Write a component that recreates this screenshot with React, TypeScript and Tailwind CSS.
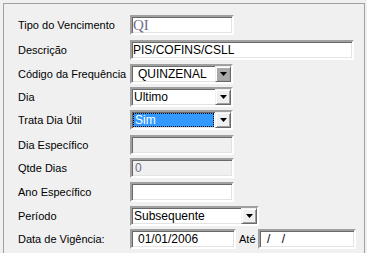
import type { ReactNode } from 'react';

const sunken =
  'border-2 border-t-[#a0a0a0] border-l-[#a0a0a0] border-b-white border-r-white shadow-[inset_1px_1px_0_#696969,inset_-1px_-1px_0_#e3e3e3]';

function Row({ label, h, children }: { label: string; h: string; children: ReactNode }) {
  return (
    <div className={`flex items-start ${h}`}>
      <div className="w-[112px] h-[20px] flex items-center text-[11px] text-black">{label}</div>
      {children}
    </div>
  );
}

function Field({ w, disabled, children }: { w: string; disabled?: boolean; children?: ReactNode }) {
  return (
    <div className={`${w} h-[20px] ${sunken} ${disabled ? 'bg-[#f0f0f0]' : 'bg-white'} flex items-center pl-[1px] text-[12px] leading-none overflow-hidden whitespace-nowrap`}>
      {children}
    </div>
  );
}

function Arrow() {
  return (
    <svg width="7" height="4" viewBox="0 0 7 4">
      <path d="M0 0h7L3.5 4z" fill="#000" />
    </svg>
  );
}

function Combo({ w, text, pad = 'pl-[1px]', dark, selected }: { w: string; text: string; pad?: string; dark?: boolean; selected?: boolean }) {
  return (
    <div className={`${w} h-[20px] ${sunken} bg-white flex items-stretch text-[12px] leading-none`}>
      <div className="flex-1 flex items-center min-w-0 p-[1px]">
        {selected ? (
          <div className="w-full h-full bg-[#3399ff] border border-dotted border-black text-white flex items-center pl-[1px]">{text}</div>
        ) : (
          <span className={pad}>{text}</span>
        )}
      </div>
      <div
        className={`w-[16px] h-[16px] flex items-center justify-center border border-t-[#f0f0f0] border-l-[#f0f0f0] border-b-[#696969] border-r-[#696969] shadow-[inset_1px_1px_0_#fff,inset_-1px_-1px_0_#a0a0a0] ${dark ? 'bg-[#a9a9a9]' : 'bg-[#f0f0f0]'}`}
      >
        <Arrow />
      </div>
    </div>
  );
}

export default function App() {
  return (
    <div className="w-[367px] h-[253px] bg-[#f0f0f0] overflow-hidden pt-[3px] pl-[3px] pr-[2px] font-['Liberation_Sans',Arial,sans-serif]">
      <div className="border border-[#a0a0a0] h-[270px] pl-[14px] pt-[11px]">
        <Row label="Tipo do Vencimento" h="h-[25px]">
          <Field w="w-[104px]">
            <span className="font-['Liberation_Serif',serif] text-[15px] text-[#6d6d8c]">QI</span>
          </Field>
        </Row>
        <Row label="Descrição" h="h-[24px]">
          <Field w="w-[224px]">PIS/COFINS/CSLL</Field>
        </Row>
        <Row label="Código da Frequência" h="h-[23px]">
          <Combo w="w-[103px]" text="QUINZENAL" pad="pl-[5px]" dark />
        </Row>
        <Row label="Dia" h="h-[23px]">
          <Combo w="w-[103px]" text="Ultimo" />
        </Row>
        <Row label="Trata Dia Útil" h="h-[25px]">
          <Combo w="w-[103px]" text="Sim" selected />
        </Row>
        <Row label="Dia Específico" h="h-[23px]">
          <Field w="w-[104px]" disabled />
        </Row>
        <Row label="Qtde Dias" h="h-[24px]">
          <Field w="w-[104px]" disabled>
            <span className="pl-[2px] text-[#6d6d8c]">0</span>
          </Field>
        </Row>
        <Row label="Ano Específico" h="h-[24px]">
          <Field w="w-[104px]" />
        </Row>
        <Row label="Período" h="h-[23px]">
          <Combo w="w-[129px]" text="Subsequente" />
        </Row>
        <Row label="Data de Vigência:" h="h-[24px]">
          <Field w="w-[106px]">
            <span className="pl-[5px]">01/01/2006</span>
          </Field>
          <div className="w-[22px] h-[20px] flex items-center pl-[3px] text-[11px]">Até</div>
          <Field w="w-[98px]">
            <span className="pl-[6px] tracking-[4px]">/ /</span>
          </Field>
        </Row>
      </div>
    </div>
  );
}
